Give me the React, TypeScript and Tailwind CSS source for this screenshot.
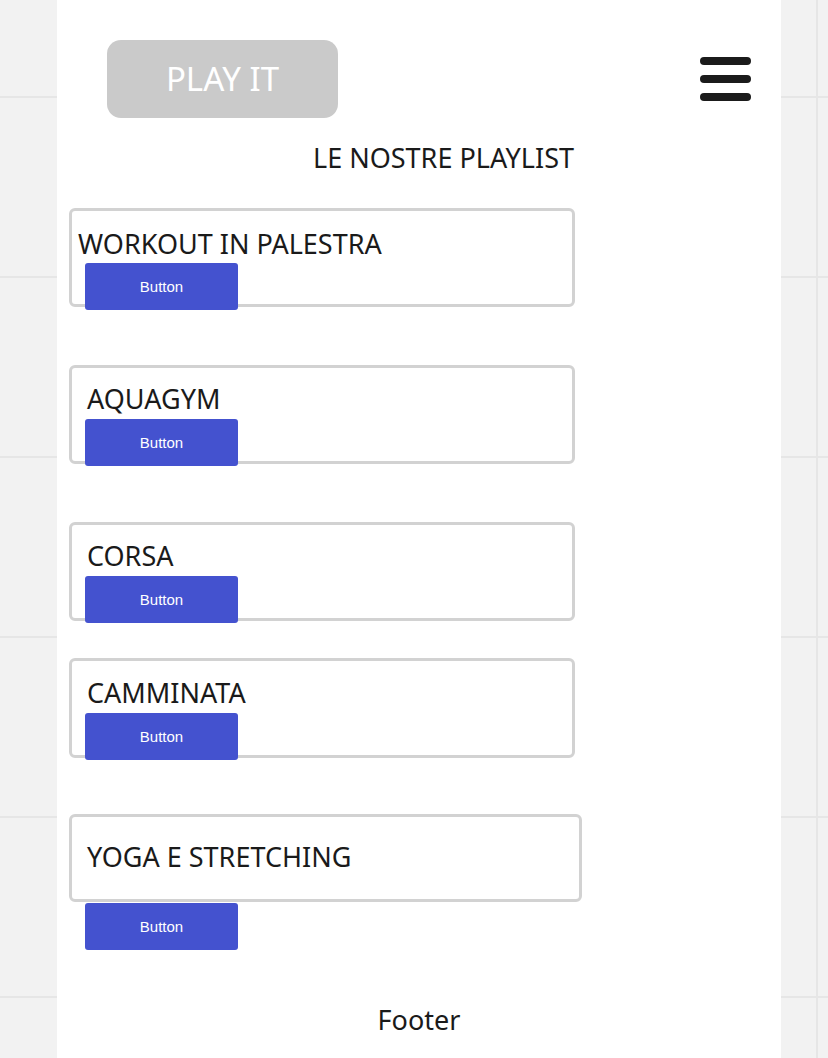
import React from "react";

const font = { fontFamily: '"Noto Sans", "Open Sans", sans-serif' };

function PlayButton() {
  return (
    <button
      className="ml-[13px] mt-[3px] flex h-[47px] w-[153px] shrink-0 items-center justify-center rounded-[3px] bg-[#4452cf] pb-[1px] text-[15px] text-white"
      style={{ fontFamily: '"Liberation Sans", Arial, sans-serif' }}
    >
      Button
    </button>
  );
}

export default function App() {
  return (
    <div
      className="flex min-h-screen w-full bg-[#f2f2f2] bg-[linear-gradient(to_bottom,#e6e6e6_2px,transparent_2px),linear-gradient(to_right,#e6e6e6_2px,transparent_2px)] bg-[size:180px_180px] bg-[position:96px_96px]"
      style={font}
    >
      <div className="ml-[57px] flex min-h-screen w-[724px] flex-col bg-white text-[#1a1a1a]">
        <div className="flex items-start justify-between pl-[50px] pr-[30px] pt-[40px]">
          <button className="flex h-[78px] w-[231px] items-center justify-center rounded-[14px] bg-[#cacaca] text-[33px] text-white">
            PLAY IT
          </button>
          <div className="mt-[17px] flex flex-col gap-[10px]">
            <div className="h-[8px] w-[51px] rounded-full bg-[#1b1b1b]" />
            <div className="h-[8px] w-[51px] rounded-full bg-[#1b1b1b]" />
            <div className="h-[8px] w-[51px] rounded-full bg-[#1b1b1b]" />
          </div>
        </div>

        <div className="mt-[22px] pl-[256px] text-[27px] leading-[35px]">LE NOSTRE PLAYLIST</div>

        <div className="flex flex-col pl-[12px] text-[27px] leading-[35px]">
          <div className="mt-[33px] box-border h-[99px] w-[506px] rounded-[6px] border-[3px] border-[#d2d2d2] pt-[15px]">
            <div className="pl-[6px]">WORKOUT IN PALESTRA</div>
            <div className="-mt-[1px]">
              <PlayButton />
            </div>
          </div>
          <div className="mt-[58px] box-border h-[99px] w-[506px] rounded-[6px] border-[3px] border-[#d2d2d2] pt-[13px]">
            <div className="pl-[15px]">AQUAGYM</div>
            <PlayButton />
          </div>
          <div className="mt-[58px] box-border h-[99px] w-[506px] rounded-[6px] border-[3px] border-[#d2d2d2] pt-[13px]">
            <div className="pl-[15px]">CORSA</div>
            <PlayButton />
          </div>
          <div className="mt-[37px] box-border h-[100px] w-[506px] rounded-[6px] border-[3px] border-[#d2d2d2] pt-[14px]">
            <div className="pl-[15px]">CAMMINATA</div>
            <PlayButton />
          </div>
          <div className="mt-[56px] box-border h-[88px] w-[513px] rounded-[6px] border-[3px] border-[#d2d2d2] pt-[22px]">
            <div className="pl-[15px]">YOGA E STRETCHING</div>
          </div>
          <div className="pl-[3px]">
            <div className="-mt-[2px]">
              <PlayButton />
            </div>
          </div>
        </div>

        <div className="mt-[52px] text-center text-[27px] leading-[35px]">Footer</div>
      </div>
    </div>
  );
}
